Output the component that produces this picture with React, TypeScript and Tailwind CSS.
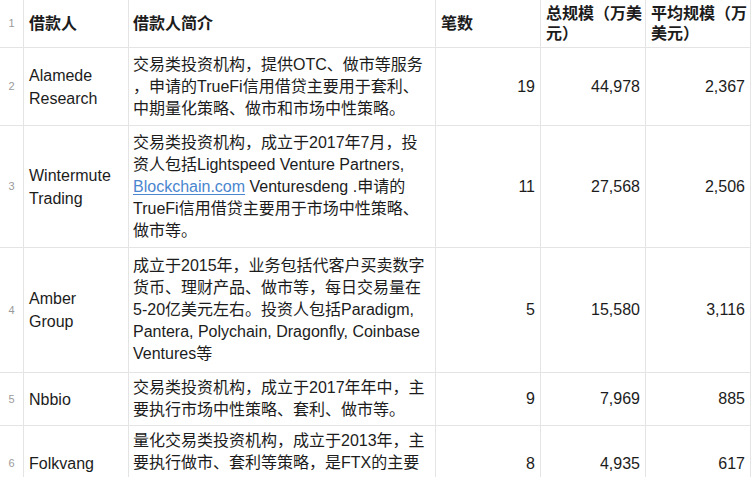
import React from 'react';

type Row = {
  n: number;
  name: string[];
  desc: React.ReactNode[];
  count: string;
  total: string;
  avg: string;
  h: string;
};

const rows: Row[] = [
  {
    n: 2,
    name: ['Alamede', 'Research'],
    desc: [
      '交易类投资机构，提供OTC、做市等服务',
      '，申请的TrueFi信用借贷主要用于套利、',
      '中期量化策略、做市和市场中性策略。',
    ],
    count: '19',
    total: '44,978',
    avg: '2,367',
    h: 'h-[78px]',
  },
  {
    n: 3,
    name: ['Wintermute', 'Trading'],
    desc: [
      '交易类投资机构，成立于2017年7月，投',
      '资人包括Lightspeed Venture Partners,',
      <>
        <span className="text-[#4a86d0] underline underline-offset-2">Blockchain.com</span> Venturesdeng .申请的
      </>,
      'TrueFi信用借贷主要用于市场中性策略、',
      '做市等。',
    ],
    count: '11',
    total: '27,568',
    avg: '2,506',
    h: 'h-[122px]',
  },
  {
    n: 4,
    name: ['Amber', 'Group'],
    desc: [
      '成立于2015年，业务包括代客户买卖数字',
      '货币、理财产品、做市等，每日交易量在',
      '5-20亿美元左右。投资人包括Paradigm,',
      'Pantera, Polychain, Dragonfly, Coinbase',
      'Ventures等',
    ],
    count: '5',
    total: '15,580',
    avg: '3,116',
    h: 'h-[125px]',
  },
  {
    n: 5,
    name: ['Nbbio'],
    desc: ['交易类投资机构，成立于2017年年中，主', '要执行市场中性策略、套利、做市等。'],
    count: '9',
    total: '7,969',
    avg: '885',
    h: 'h-[53px]',
  },
  {
    n: 6,
    name: ['Folkvang'],
    desc: ['量化交易类投资机构，成立于2013年，主', '要执行做市、套利等策略，是FTX的主要'],
    count: '8',
    total: '4,935',
    avg: '617',
    h: 'h-[76px]',
  },
];

const cell = 'border-r border-b border-[#e4e4e4] flex items-center';

export default function App() {
  return (
    <div className="h-[477px] w-[753px] overflow-hidden bg-white text-[#1c1c1c] font-['Liberation_Sans','Noto_Sans_CJK_SC',sans-serif] text-[16px]">
      {/* header */}
      <div className="flex h-[48px]">
        <div className={`${cell} w-[24px] justify-center text-[11px] text-[#9a9a9a]`}>1</div>
        <div className={`${cell} w-[105px] px-[5px] font-bold`}>借款人</div>
        <div className={`${cell} w-[307px] px-[4px] font-bold`}>借款人简介</div>
        <div className={`${cell} w-[105px] px-[5px] font-bold`}>笔数</div>
        <div className={`${cell} w-[105px] px-[5px] font-bold leading-[20px]`}>
          <div>
            <div className="whitespace-nowrap">总规模（万美</div>
            <div className="whitespace-nowrap">元）</div>
          </div>
        </div>
        <div className={`${cell} w-[105px] px-[5px] font-bold leading-[20px]`}>
          <div>
            <div className="whitespace-nowrap">平均规模（万</div>
            <div className="whitespace-nowrap">美元）</div>
          </div>
        </div>
      </div>

      {rows.map((r) => (
        <div key={r.n} className={`flex ${r.h} shrink-0`}>
          <div className={`${cell} w-[24px] justify-center text-[11px] text-[#9a9a9a]`}>{r.n}</div>
          <div className={`${cell} w-[105px] px-[5px] leading-[23px]`}>
            <div>
              {r.name.map((t) => (
                <div key={t} className="whitespace-nowrap">{t}</div>
              ))}
            </div>
          </div>
          <div className={`${cell} w-[307px] pl-[4px] leading-[22px] ${r.n === 6 ? '!items-start pt-[4px]' : ''}`}>
            <div>
              {r.desc.map((t, i) => (
                <div key={i} className="whitespace-nowrap">{t}</div>
              ))}
            </div>
          </div>
          <div className={`${cell} w-[105px] px-[5px] justify-end`}>{r.count}</div>
          <div className={`${cell} w-[105px] px-[5px] justify-end`}>{r.total}</div>
          <div className={`${cell} w-[105px] px-[5px] justify-end`}>{r.avg}</div>
        </div>
      ))}
    </div>
  );
}
